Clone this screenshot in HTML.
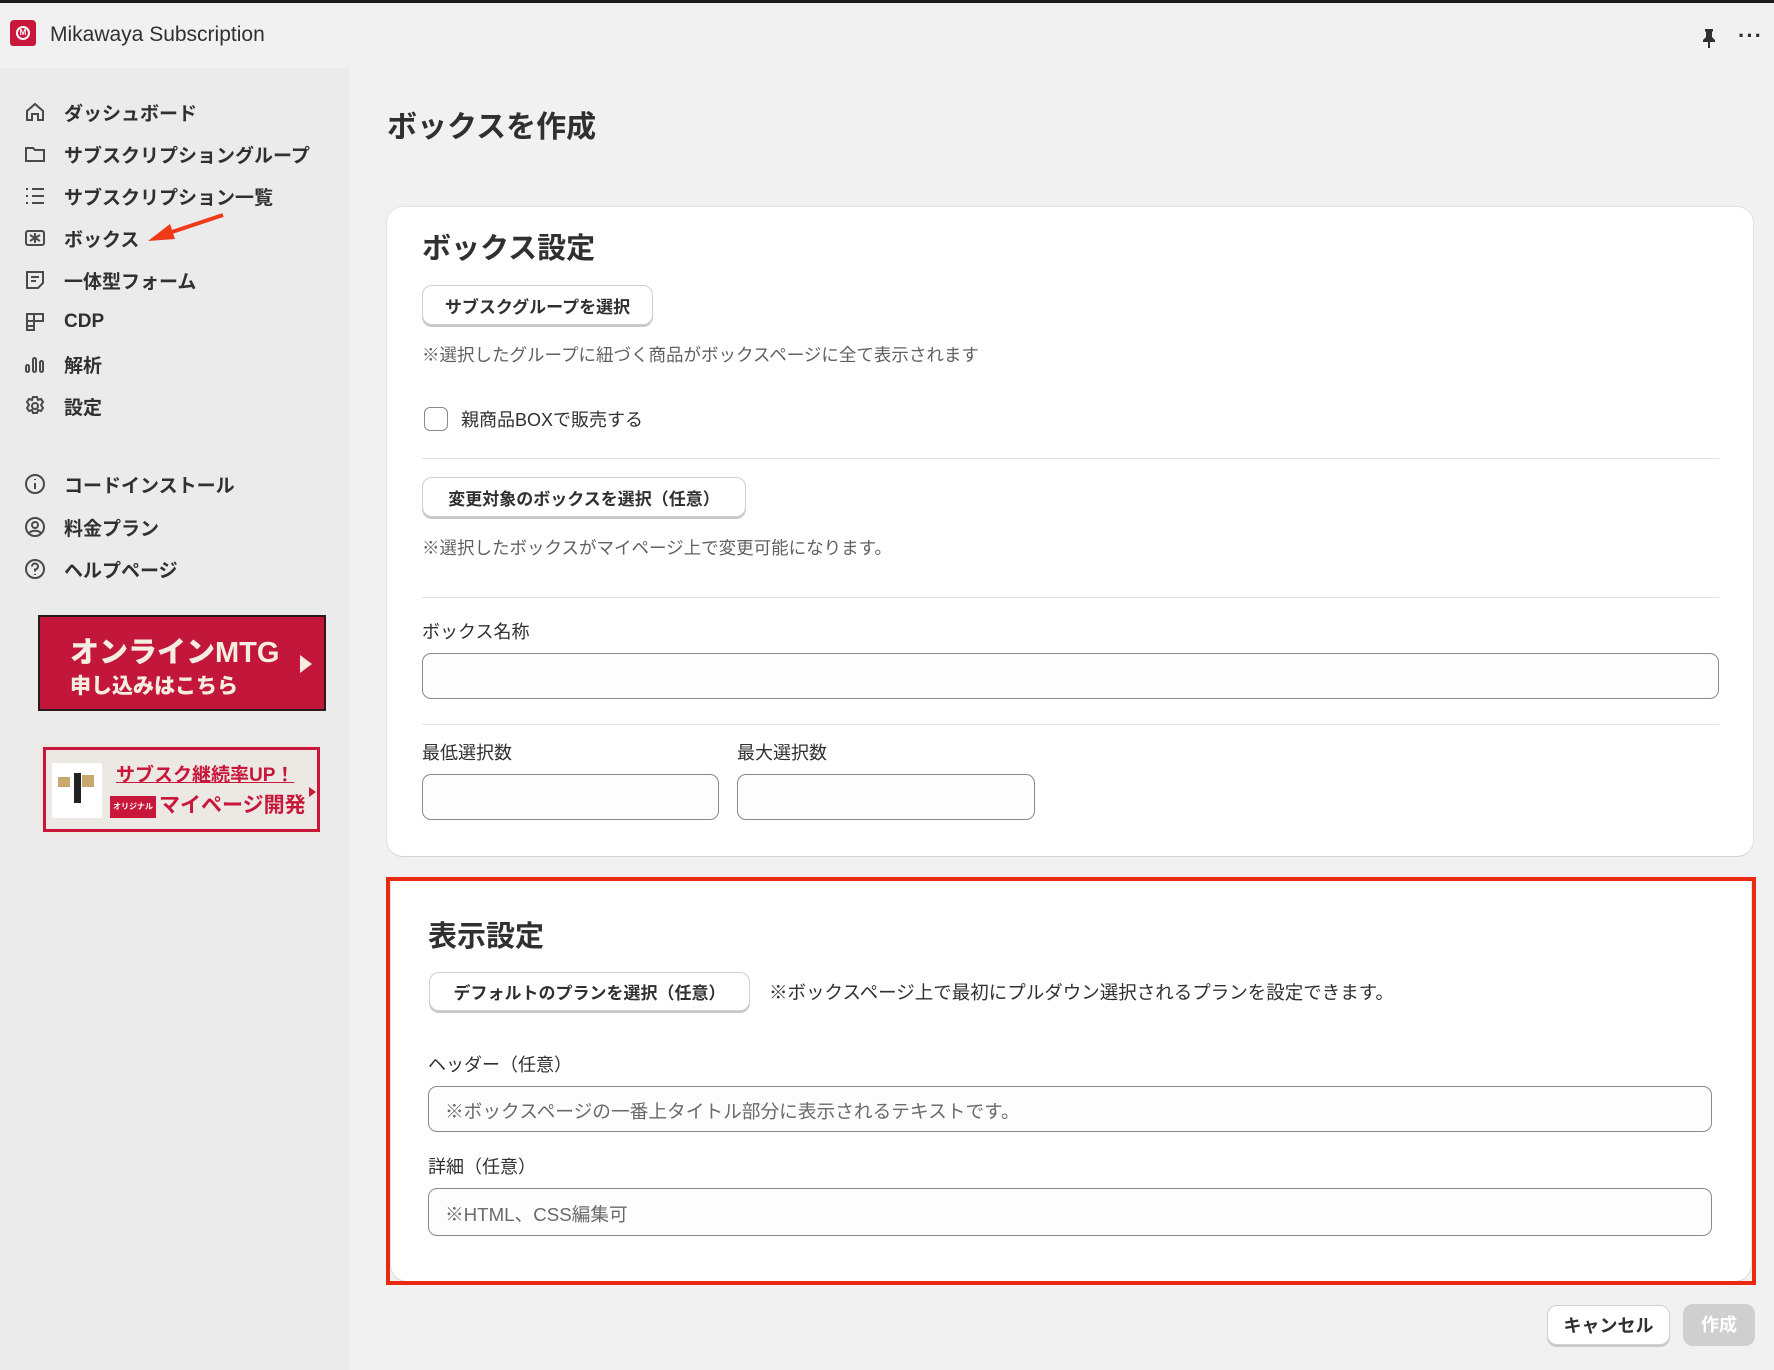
<!DOCTYPE html>
<html><head><meta charset="utf-8"><style>
*{box-sizing:border-box;margin:0;padding:0}
body{width:1774px;height:1370px;position:relative;overflow:hidden;background:#f1f1f1;font-family:"Liberation Sans","Noto Sans CJK JP",sans-serif;color:#303030}
.a{position:absolute}
.top{left:0;top:0;width:1774px;height:68px;background:#f1f1f1;border-top:3px solid #1a1a1a}
.side{left:0;top:68px;width:350px;height:1302px;background:#ebebeb}
.nav{position:absolute;left:24px;font-size:19px;font-weight:700;color:#303030;display:flex;align-items:center;gap:18px;height:30px}
.nav svg{width:22px;height:22px}
.card{background:#fff;border-radius:16px;box-shadow:0 1px 0 #d4d4d4,0 0 0 1px #e3e3e3}
.btn{position:absolute;background:#fff;border:1px solid #d0d0d0;border-radius:10px;box-shadow:0 2px 0 #c9c9c9;font-size:17px;font-weight:700;display:flex;align-items:center;justify-content:center;color:#303030}
.note{position:absolute;font-size:17.5px;color:#616161;white-space:nowrap}
.lbl{position:absolute;font-size:18px;color:#303030}
.inp{position:absolute;border:1px solid #8a8a8a;border-radius:9px;background:#fdfdfd}
.hr{position:absolute;height:1px;background:#e3e3e3}
</style></head><body>
<div class="a top">
 <div class="a" style="left:10px;top:17px;width:26px;height:26px;background:#c8173a;border-radius:4px 4px 3px 3px"><div style="position:absolute;left:6px;top:6px;width:14px;height:14px;border:2px solid #fff;border-radius:50%;color:#fff;font-size:8px;line-height:10px;text-align:center;font-weight:700">M</div></div>
 <div class="a" style="left:50px;top:20px;font-size:21px;color:#303030">Mikawaya Subscription</div>
 <svg class="a" style="left:1700px;top:25px" width="18" height="20" viewBox="0 0 18 20"><path d="M5 1h8v2l-1 1v5l3 3v2H3v-2l3-3V4L5 3z M8 14h2v6H8z" fill="#303030"/></svg>
 <div class="a" style="left:1738px;top:20px;font-size:22px;font-weight:700;letter-spacing:1px">···</div>
</div>
<div class="a side"></div>
<svg class="a" style="left:148px;top:212px" width="80" height="32" viewBox="0 0 80 32"><path d="M75 3L18 22" stroke="#f03a17" stroke-width="4"/><path d="M0 29L22 12L27 27Z" fill="#f03a17"/></svg>
<div class="nav" style="top:97px"><svg viewBox="0 0 22 22" fill="none" stroke="#4a4a4a" stroke-width="2"><path d="M3 10l8-7 8 7v9h-5v-6h-6v6H3z"/></svg>ダッシュボード</div>
<div class="nav" style="top:139px"><svg viewBox="0 0 22 22" fill="none" stroke="#4a4a4a" stroke-width="2"><path d="M2 5h7l2 2h9v11H2z"/></svg>サブスクリプショングループ</div>
<div class="nav" style="top:181px"><svg viewBox="0 0 22 22" fill="none" stroke="#4a4a4a" stroke-width="2"><path d="M8 4h12M8 11h12M8 18h12M2 4h2M2 11h2M2 18h2"/></svg>サブスクリプション一覧</div>
<div class="nav" style="top:223px"><svg viewBox="0 0 22 22" fill="none" stroke="#4a4a4a" stroke-width="2"><rect x="2" y="4" width="18" height="14" rx="2"/><path d="M6 8l10 6M6 14l10-6M11 6v10"/></svg>ボックス</div>
<div class="nav" style="top:265px"><svg viewBox="0 0 22 22" fill="none" stroke="#4a4a4a" stroke-width="2"><path d="M3 3h16v11l-5 5H3z M7 8h8M7 12h5"/></svg>一体型フォーム</div>
<div class="nav" style="top:307px"><svg viewBox="0 0 22 22" fill="none" stroke="#4a4a4a" stroke-width="2"><path d="M3 3h16v7H10v9H3z M3 10h7 M10 3v7 M3 15h7"/></svg>CDP</div>
<div class="nav" style="top:349px"><svg viewBox="0 0 22 22" fill="none" stroke="#4a4a4a" stroke-width="2"><rect x="2" y="12" width="3" height="7" rx="1.5"/><rect x="9" y="5" width="3" height="14" rx="1.5"/><rect x="16" y="8" width="3" height="11" rx="1.5"/></svg>解析</div>
<div class="nav" style="top:391px"><svg viewBox="0 0 22 22" fill="none" stroke="#4a4a4a" stroke-width="2"><circle cx="11" cy="11" r="3"/><path d="M9 2h4l1 3 3-1 2 3-2 3 2 3-2 3-3-1-1 3H9l-1-3-3 1-2-3 2-3-2-3 2-3 3 1z"/></svg>設定</div>
<div class="nav" style="top:469px"><svg viewBox="0 0 22 22" fill="none" stroke="#4a4a4a" stroke-width="2"><circle cx="11" cy="11" r="9"/><path d="M11 10v6M11 6v1"/></svg>コードインストール</div>
<div class="nav" style="top:512px"><svg viewBox="0 0 22 22" fill="none" stroke="#4a4a4a" stroke-width="2"><circle cx="11" cy="11" r="9"/><circle cx="11" cy="9" r="3"/><path d="M5 17c3-3 9-3 12 0"/></svg>料金プラン</div>
<div class="nav" style="top:554px"><svg viewBox="0 0 22 22" fill="none" stroke="#4a4a4a" stroke-width="2"><circle cx="11" cy="11" r="9"/><path d="M8 8.5a3 3 0 1 1 3 3v2M11 16v1"/></svg>ヘルプページ</div>
<div class="a" style="left:38px;top:615px;width:288px;height:96px;background:#c2163a;border:2px solid #2a1a1a;color:#f5ece2">
 <div class="a" style="left:30px;top:12px;font-size:29px;font-weight:900">オンラインMTG</div>
 <div class="a" style="left:30px;top:53px;font-size:21px;font-weight:900">申し込みはこちら</div>
 <div class="a" style="left:260px;top:38px;border-left:12px solid #f5ece2;border-top:9px solid transparent;border-bottom:9px solid transparent"></div>
</div>
<div class="a" style="left:39px;top:743px;width:285px;height:93px;background:#ece8e3">
 <div class="a" style="left:4px;top:4px;width:277px;height:85px;border:3px solid #c8173a"></div>
 <div class="a" style="left:13px;top:20px;width:50px;height:55px;background:#fff"><div class="a" style="left:6px;top:14px;width:12px;height:10px;background:#c9a870"></div><div class="a" style="left:30px;top:12px;width:12px;height:12px;background:#c9a870"></div><div class="a" style="left:22px;top:10px;width:7px;height:30px;background:#222"></div></div>
 <div class="a" style="left:77px;top:17px;font-size:19px;font-weight:700;color:#c8173a;text-decoration:underline">サブスク継続率UP！</div>
 <div class="a" style="left:71px;top:53px;width:46px;height:22px;background:#c8173a;color:#fff;font-size:8px;font-weight:700;line-height:22px;text-align:center">オリジナル</div>
 <div class="a" style="left:120px;top:46px;font-size:21px;font-weight:700;color:#c8173a">マイページ開発</div>
 <div class="a" style="left:270px;top:44px;border-left:7px solid #c8173a;border-top:5px solid transparent;border-bottom:5px solid transparent"></div>
</div>
<div class="a" style="left:387px;top:102px;font-size:30px;font-weight:700">ボックスを作成</div>
<div class="a card" style="left:387px;top:207px;width:1366px;height:649px"></div>
<div class="a" style="left:422px;top:225px;font-size:29px;font-weight:700">ボックス設定</div>
<div class="btn" style="left:422px;top:285px;width:231px;height:40px">サブスクグループを選択</div>
<div class="note" style="left:422px;top:342px">※選択したグループに紐づく商品がボックスページに全て表示されます</div>
<div class="a" style="left:424px;top:407px;width:24px;height:24px;border:1.5px solid #8a8a8a;border-radius:6px;background:#fff"></div>
<div class="lbl" style="left:461px;top:406px">親商品BOXで販売する</div>
<div class="hr" style="left:422px;top:458px;width:1297px"></div>
<div class="btn" style="left:422px;top:477px;width:324px;height:40px">変更対象のボックスを選択（任意）</div>
<div class="note" style="left:422px;top:535px">※選択したボックスがマイページ上で変更可能になります。</div>
<div class="hr" style="left:422px;top:597px;width:1297px"></div>
<div class="lbl" style="left:422px;top:618px">ボックス名称</div>
<div class="inp" style="left:422px;top:653px;width:1297px;height:46px"></div>
<div class="hr" style="left:422px;top:724px;width:1297px"></div>
<div class="lbl" style="left:422px;top:739px">最低選択数</div>
<div class="lbl" style="left:737px;top:739px">最大選択数</div>
<div class="inp" style="left:422px;top:774px;width:297px;height:46px"></div>
<div class="inp" style="left:737px;top:774px;width:298px;height:46px"></div>
<div class="a card" style="left:391px;top:881px;width:1360px;height:400px;border-radius:4px 4px 16px 16px"></div>
<div class="a" style="left:386px;top:877px;width:1370px;height:408px;border:4px solid #ea2a10"></div>
<div class="a" style="left:428px;top:913px;font-size:29px;font-weight:700">表示設定</div>
<div class="btn" style="left:429px;top:972px;width:321px;height:39px">デフォルトのプランを選択（任意）</div>
<div class="note" style="left:769px;top:979px;color:#303030;font-size:18.5px">※ボックスページ上で最初にプルダウン選択されるプランを設定できます。</div>
<div class="lbl" style="left:428px;top:1051px">ヘッダー（任意）</div>
<div class="inp" style="left:428px;top:1086px;width:1284px;height:46px"><div class="a" style="left:16px;top:10px;font-size:18.7px;color:#6a6a6a;white-space:nowrap">※ボックスページの一番上タイトル部分に表示されるテキストです。</div></div>
<div class="lbl" style="left:428px;top:1153px">詳細（任意）</div>
<div class="inp" style="left:428px;top:1188px;width:1284px;height:48px"><div class="a" style="left:16px;top:11px;font-size:18.7px;color:#6a6a6a">※HTML、CSS編集可</div></div>
<div class="btn" style="left:1547px;top:1305px;width:123px;height:40px;font-size:18px">キャンセル</div>
<div class="a" style="left:1683px;top:1304px;width:72px;height:42px;background:#cfcfcf;border-radius:10px;color:#fff;font-size:18px;font-weight:700;text-align:center;line-height:42px">作成</div>
</body></html>
